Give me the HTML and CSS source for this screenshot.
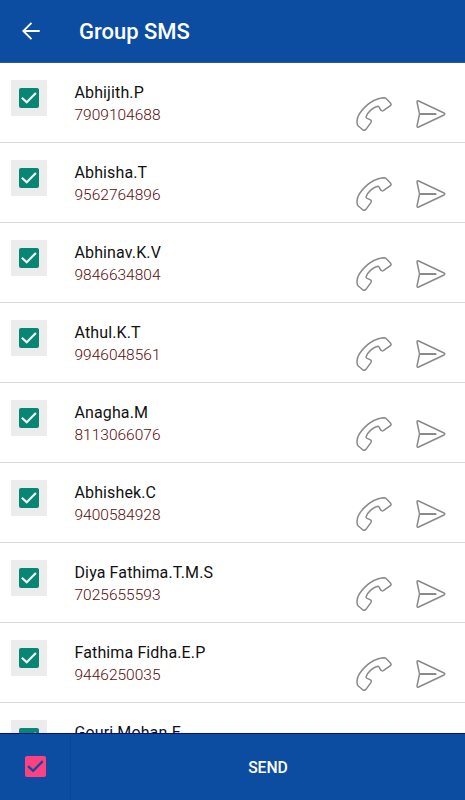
FILE: index.html
```html
<!DOCTYPE html>
<html lang="en">
<head>
  <meta charset="UTF-8">
  <meta name="viewport" content="width=device-width, initial-scale=1.0">
  <title>Group SMS</title>
  <link rel="stylesheet" href="styles.css">
</head>
<body>
  <!-- Shared icons -->
  <svg class="icon-defs" xmlns="http://www.w3.org/2000/svg">
    <symbol id="icon-check" viewBox="0 0 20 20">
      <path d="M2.9 9.7L7.7 14.2L16.9 4.9" fill="none" stroke="currentColor" stroke-width="2.2"/>
    </symbol>
    <symbol id="icon-phone" viewBox="0 0 108 102">
      <path d="M3 76C1 49 43 4 84 2Q88 2 91 5L104 19Q107 23 103 26L82 41Q78 43 75 40C70 35 72 29 66 28C52 30 34 46 30 60C29 65 40 65 45 70Q47 73 45 76L30 97Q26 102 21 99L7 87Q3 83 3 76Z" fill="none" stroke="currentColor" stroke-width="4.5" stroke-linejoin="round"/>
    </symbol>
    <symbol id="icon-send" viewBox="0 0 90 84">
      <path d="M8 3L84 39Q89 42 84 45L8 81Q3 83 3 78L10 45Q11 42 10 39L3 6Q3 1 8 3Z" fill="none" stroke="currentColor" stroke-width="4.5" stroke-linejoin="round"/>
      <path d="M10 42H61" stroke="currentColor" stroke-width="6"/>
    </symbol>
  </svg>

  <div class="header">
    <svg class="back-icon" viewBox="0 0 18 18" fill="none">
      <path d="M17.7 9H1.5M9.5 0.8L1.3 9L9.5 17.2" stroke="currentColor" stroke-width="1.9"/>
    </svg>
    <h1 class="header-title">Group SMS</h1>
  </div>

  <div class="contact-list">
    <div class="contact">
      <div class="contact-select"><span class="checkbox"><svg><use href="#icon-check"/></svg></span></div>
      <div class="contact-info">
        <div class="contact-name">Abhijith.P</div>
        <div class="contact-number">7909104688</div>
      </div>
      <svg class="call-icon"><use href="#icon-phone"/></svg>
      <svg class="send-icon"><use href="#icon-send"/></svg>
    </div>
    <div class="contact">
      <div class="contact-select"><span class="checkbox"><svg><use href="#icon-check"/></svg></span></div>
      <div class="contact-info">
        <div class="contact-name">Abhisha.T</div>
        <div class="contact-number">9562764896</div>
      </div>
      <svg class="call-icon"><use href="#icon-phone"/></svg>
      <svg class="send-icon"><use href="#icon-send"/></svg>
    </div>
    <div class="contact">
      <div class="contact-select"><span class="checkbox"><svg><use href="#icon-check"/></svg></span></div>
      <div class="contact-info">
        <div class="contact-name">Abhinav.K.V</div>
        <div class="contact-number">9846634804</div>
      </div>
      <svg class="call-icon"><use href="#icon-phone"/></svg>
      <svg class="send-icon"><use href="#icon-send"/></svg>
    </div>
    <div class="contact">
      <div class="contact-select"><span class="checkbox"><svg><use href="#icon-check"/></svg></span></div>
      <div class="contact-info">
        <div class="contact-name">Athul.K.T</div>
        <div class="contact-number">9946048561</div>
      </div>
      <svg class="call-icon"><use href="#icon-phone"/></svg>
      <svg class="send-icon"><use href="#icon-send"/></svg>
    </div>
    <div class="contact">
      <div class="contact-select"><span class="checkbox"><svg><use href="#icon-check"/></svg></span></div>
      <div class="contact-info">
        <div class="contact-name">Anagha.M</div>
        <div class="contact-number">8113066076</div>
      </div>
      <svg class="call-icon"><use href="#icon-phone"/></svg>
      <svg class="send-icon"><use href="#icon-send"/></svg>
    </div>
    <div class="contact">
      <div class="contact-select"><span class="checkbox"><svg><use href="#icon-check"/></svg></span></div>
      <div class="contact-info">
        <div class="contact-name">Abhishek.C</div>
        <div class="contact-number">9400584928</div>
      </div>
      <svg class="call-icon"><use href="#icon-phone"/></svg>
      <svg class="send-icon"><use href="#icon-send"/></svg>
    </div>
    <div class="contact">
      <div class="contact-select"><span class="checkbox"><svg><use href="#icon-check"/></svg></span></div>
      <div class="contact-info">
        <div class="contact-name">Diya Fathima.T.M.S</div>
        <div class="contact-number">7025655593</div>
      </div>
      <svg class="call-icon"><use href="#icon-phone"/></svg>
      <svg class="send-icon"><use href="#icon-send"/></svg>
    </div>
    <div class="contact">
      <div class="contact-select"><span class="checkbox"><svg><use href="#icon-check"/></svg></span></div>
      <div class="contact-info">
        <div class="contact-name">Fathima Fidha.E.P</div>
        <div class="contact-number">9446250035</div>
      </div>
      <svg class="call-icon"><use href="#icon-phone"/></svg>
      <svg class="send-icon"><use href="#icon-send"/></svg>
    </div>
    <!-- Cut off by the bottom bar -->
    <div class="contact">
      <div class="contact-select"><span class="checkbox"><svg><use href="#icon-check"/></svg></span></div>
      <div class="contact-info">
        <div class="contact-name">Gouri Mohan.E</div>
      </div>
    </div>
  </div>

  <div class="bottom-bar">
    <div class="select-all">
      <span class="checkbox checkbox-pink"><svg><use href="#icon-check"/></svg></span>
    </div>
    <button class="send-button">SEND</button>
  </div>
</body>
</html>
```
FILE: styles.css
```css
* {
  box-sizing: border-box;
}

body {
  display: flex;
  flex-direction: column;
  height: 100vh;
  margin: 0;
  overflow: hidden;
  font-family: Roboto, sans-serif;
  background-color: #fff;
  color: #111;
}

svg {
  display: block;
}

.icon-defs {
  display: none;
}

/* Header */
.header {
  display: flex;
  align-items: center;
  flex: none;
  height: 63px;
  padding-left: 22px;
  background-color: #0c4da2;
  border-bottom: 1px solid #31569a;
  color: #fff;
}

.back-icon {
  width: 18px;
  height: 18px;
}

.header-title {
  margin: 1px 0 0 39px;
  font-size: 22px;
  font-weight: 500;
  line-height: 26px;
}

/* Contacts */
.contact-list {
  flex: 1;
  min-height: 0;
  overflow: hidden;
}

.contact {
  display: flex;
  align-items: flex-start;
  height: 80px;
  padding: 17px 19px 0 11px;
  border-bottom: 1px solid #d9d9d9;
}

.contact-select {
  display: flex;
  align-items: center;
  justify-content: center;
  width: 36px;
  height: 36px;
  padding-right: 1px;
  background-color: #ececec;
}

.checkbox {
  width: 20px;
  height: 20px;
  border-radius: 2px;
  background-color: #078673;
  color: #f4f4f4;
}

.checkbox svg {
  width: 100%;
  height: 100%;
}

.contact-info {
  flex: 1;
  margin: 2px 0 0 27.5px;
}

.contact-name {
  font-size: 16px;
  line-height: 22px;
  letter-spacing: 0.12px;
}

.contact-number {
  font-size: 15.5px;
  font-weight: 300;
  line-height: 22px;
  color: #5c0a0a;
}

.call-icon,
.send-icon {
  flex: none;
  color: #8a8a8a;
}

.call-icon {
  width: 36px;
  height: 34px;
  margin: 17px 24px 0 0;
}

.send-icon {
  width: 30px;
  height: 28px;
  margin-top: 20px;
}

/* Bottom bar */
.bottom-bar {
  display: flex;
  flex: none;
  height: 67px;
  background-color: #0c4da2;
  border-top: 1px solid #00108a;
}

.select-all {
  display: flex;
  align-items: center;
  justify-content: center;
  width: 71px;
  padding-bottom: 1px;
  border-right: 1px solid #0a4797;
}

.checkbox-pink {
  width: 21px;
  height: 21px;
  background-color: #ff4081;
  color: #0c4da2;
}

.send-button {
  flex: 1;
  padding: 0;
  border: none;
  background: none;
  font-family: inherit;
  font-size: 15.7px;
  font-weight: 500;
  color: #fff;
}
```
